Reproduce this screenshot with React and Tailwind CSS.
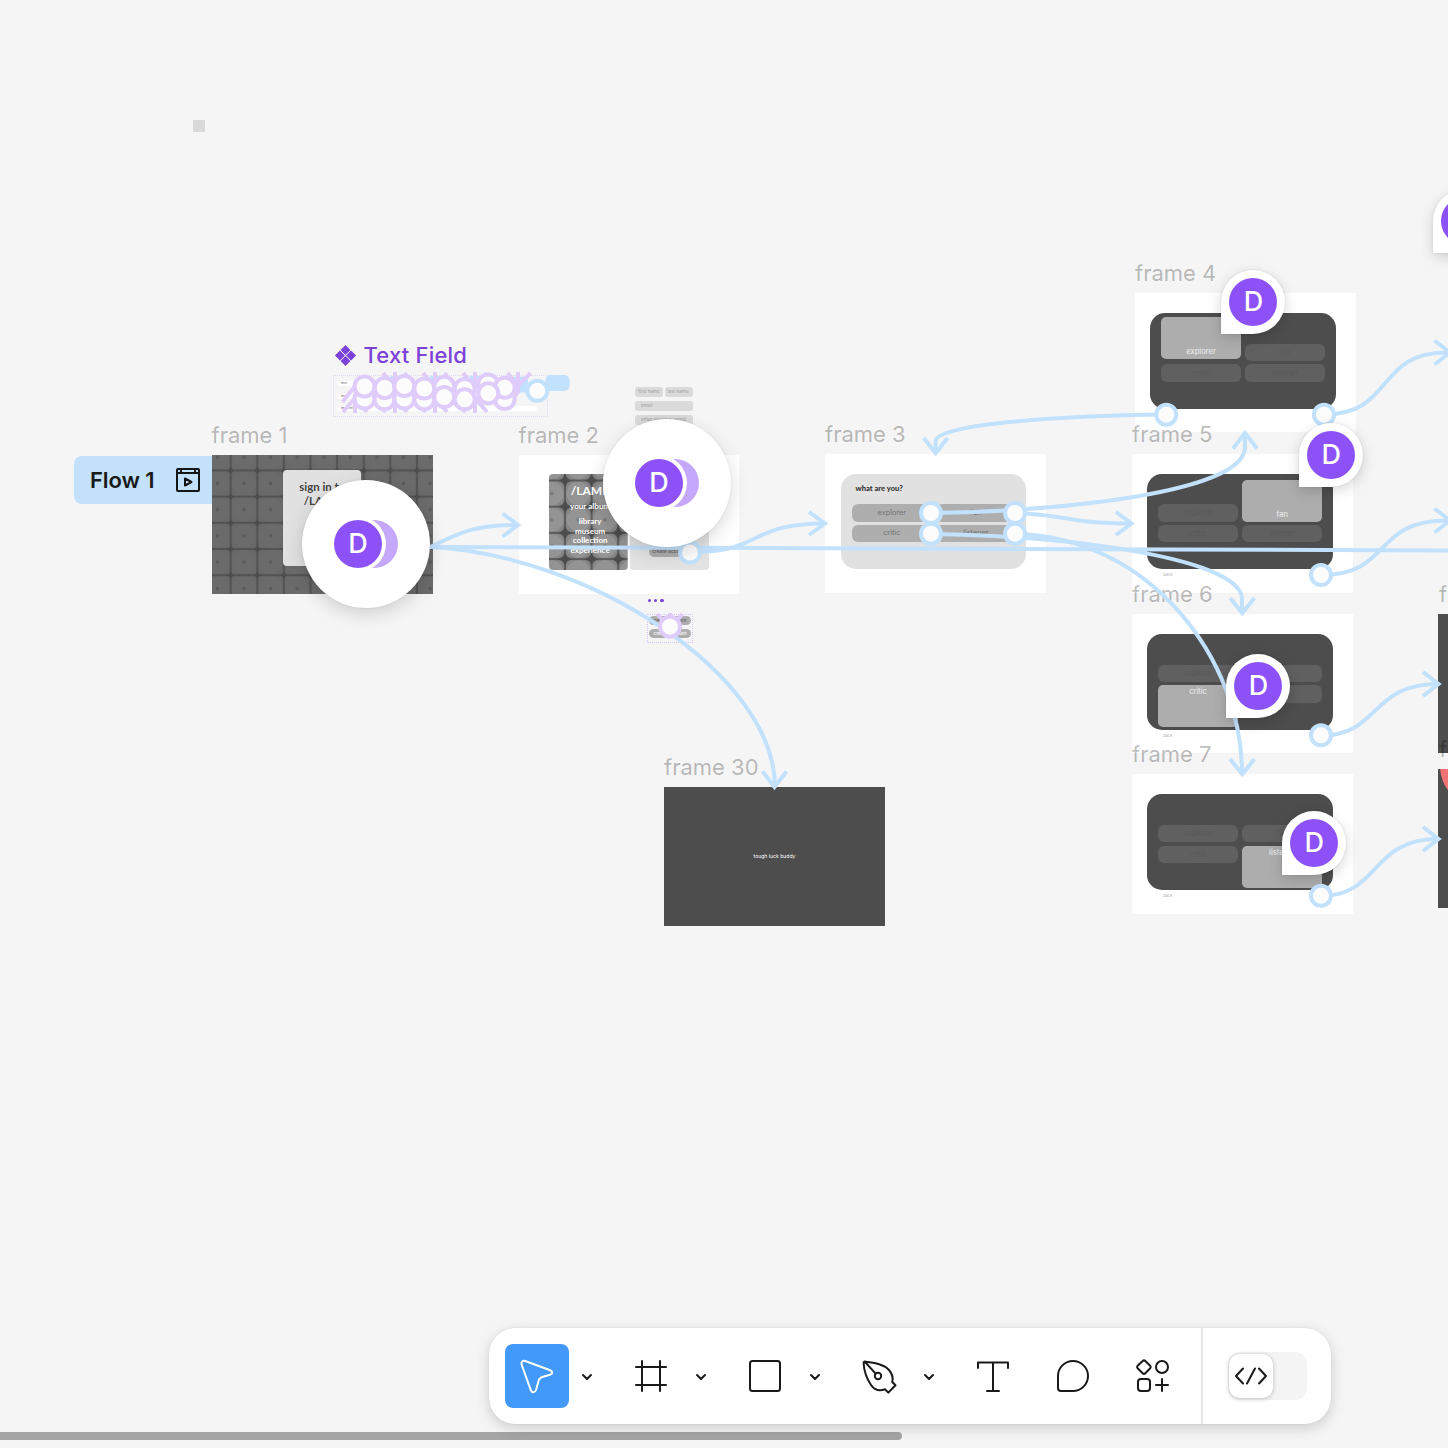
import React from "react";

const BLUE = "#c2e1fd";
const LILAC = "#dfccfa";

function Label({ className, children }) {
  return (
    <span className={`absolute text-[22px] leading-6 font-[430] whitespace-nowrap text-black/27 ${className}`}>
      {children}
    </span>
  );
}

function Pin({ className }) {
  return (
    <div className={`absolute z-20 flex size-16 items-center justify-center rounded-full rounded-bl-none bg-white shadow-[0_4px_14px_rgba(0,0,0,0.16),0_0_2px_rgba(0,0,0,0.12)] ${className}`}>
      <span className="flex size-12 items-center justify-center rounded-full bg-[#8c52f7] text-[27px] font-[450] text-white">D</span>
    </div>
  );
}

function PinCluster({ className }) {
  return (
    <div className={`absolute z-20 flex size-32 items-center justify-center rounded-full bg-white shadow-[0_6px_18px_rgba(0,0,0,0.15),0_0_2px_rgba(0,0,0,0.1)] ${className}`}>
      <span className="z-10 flex size-12 shrink-0 items-center justify-center rounded-full bg-[#8c52f7] text-[27px] font-[450] text-white ring-4 ring-white">D</span>
      <span className="-ml-8 size-12 shrink-0 rounded-full bg-[#c5a7fb]" />
    </div>
  );
}

function Texture({ id, dx, dy, light, className }) {
  return (
    <svg className={className} aria-hidden="true">
      <defs>
        <pattern id={id} width="26.6" height="26.2" x={dx} y={dy} patternUnits="userSpaceOnUse">
          <rect width="26.6" height="26.2" fill="#4c4c4c" />
          <rect x="0.7" y="0.7" width="25.2" height="24.8" rx={light ? 6 : 3.5} fill={light ? "#858585" : "#686868"} />
          <circle cx="13.3" cy="13.1" r="11.8" fill={light ? "#949494" : "#6b6b6b"} />
          <circle cx="13.3" cy="13.1" r="1.9" fill={light ? "#7a7a7a" : "#5b5b5b"} />
        </pattern>
      </defs>
      <rect width="100%" height="100%" fill={`url(#${id})`} />
    </svg>
  );
}

function Option({ active, align, children }) {
  if (active) {
    return (
      <div className={`absolute inset-x-0 flex h-[42px] justify-center rounded-[5px] bg-[#adadad] text-[7.6px] leading-[14px] text-white/80 ${align === "end" ? "bottom-0 items-end" : "top-0 items-start"}`}>
        {children}
      </div>
    );
  }
  return (
    <div className="flex h-[17.5px] w-full items-center justify-center rounded-[6px] bg-[#606060] text-[7.5px] text-[#595959]">
      {children}
    </div>
  );
}

function DarkFrame({ className, active, lift, back }) {
  const items = ["explorer", "fan", "critic", "listener"];
  return (
    <div className={`absolute h-[139.4px] w-[220.6px] bg-white px-[15.3px] pt-5 ${className}`}>
      <div className="grid h-[95.7px] w-[185.5px] grid-cols-[79.5px_79.5px] content-start gap-x-[4.7px] gap-y-[3.2px] rounded-[15px] bg-[#4d4d4d] px-[11px] pt-[30.7px]">
        {items.map((name, i) => (
          <div key={name} className={`relative h-[17.5px] ${lift && i === active ? "-translate-y-[2px]" : ""}`}>
            <Option active={i === active} align={i < 2 ? "end" : "start"}>{name}</Option>
          </div>
        ))}
      </div>
      {back && <p className="pt-[3px] pl-4 text-[4px] leading-[6px] text-black/40">back</p>}
    </div>
  );
}

const CURVES = [
  "M430 547 C455 536 468 525 518 525",
  "M430 547 C720 548 1100 549 1448 550.5",
  "M430 547 C590 555 775 675 775 787",
  "M690 552 C762 553 748 523.5 824 523.5",
  "M1166 414.5 C1050 416 936 425 935.7 441 V452",
  "M931 513 C1060 511 1245 493 1245 447 V434",
  "M1015 513 C1060 514 1070 523.5 1131 523.5",
  "M931 534 C1080 536 1242 560 1242 599 V613",
  "M1015 534 C1150 536 1242 660 1242 773",
  "M1324 414.5 C1395 414 1375 352.5 1447 352.5",
  "M1321 575 C1392 575 1372 520.5 1447 520.5",
  "M1321 735.5 C1380 735.5 1370 684 1438 684",
  "M1321 896 C1380 896 1370 839 1438 839",
];
const HEADS = [
  "M502.5 513.5 L518 525 L502.5 536.5",
  "M809 512 L825 523.5 L809 535",
  "M762.5 771.5 L774.5 787 L786.5 771.5",
  "M923.7 438 L935.7 453 L947.7 438",
  "M1233 448.5 L1245 433 L1257 448.5",
  "M1116 512 L1131.5 523.5 L1116 535",
  "M1230 598 L1242.3 613 L1254.5 598",
  "M1230 759 L1242.3 774 L1254.5 759",
  "M1434.5 340.5 L1450 352.5 L1434.5 364.5",
  "M1434.5 508.5 L1450 520.5 L1434.5 532.5",
  "M1423 672 L1438.5 684 L1423 696",
  "M1423 827 L1438.5 839 L1423 851",
];
const DOTS = [
  [690, 552.5], [931, 513], [1015, 513], [931, 533.7], [1015, 533.7],
  [1166.3, 414.7], [1324, 414.7], [1321, 575], [1321, 735.3], [1321, 895.8],
];
const FIELD_DOTS = [
  [364.5, 398.5], [384.5, 399.3], [404.3, 398.5], [424.3, 399.3], [504.7, 399], [488, 384.5],
  [364.5, 386.5], [384.7, 388], [404.3, 386], [424.3, 388.5], [444.3, 386.8], [464.7, 389],
  [444.3, 397], [464.7, 399.3], [504.7, 387.7], [488.3, 393.3],
];

function Connectors() {
  return (
    <svg className="pointer-events-none absolute inset-0 z-10 size-full" fill="none" strokeWidth="4">
      <g fill={BLUE}>
        <rect x="545.5" y="375" width="24" height="16" rx="5" />
        <rect x="512" y="376.5" width="16" height="16" rx="4" />
        <rect x="390" y="376" width="12" height="6" />
        <rect x="430" y="376" width="12" height="6" />
        <rect x="470" y="376" width="12" height="6" />
      </g>
      <g stroke={LILAC} strokeLinejoin="bevel">
        {[395, 435, 475].map((x) => (
          <path key={`t${x}`} d={`M${x - 12} 373 L${x} 387 L${x + 12} 373 M${x} 372 V387`} />
        ))}
        {[355, 395, 435, 475].map((x) => (
          <path key={`b${x}`} d={`M${x - 12} 412 L${x} 398 L${x + 12} 412 M${x} 398 V413`} />
        ))}
        <path d="M342.5 402 L356 385 M507.5 373 L518 386 L530.5 373 M518 372 V392 L508 404 M657 614 L670 628 L682.5 614 M670 613 V628" />
      </g>
      <g stroke={BLUE}>
        {CURVES.map((d) => <path key={d} d={d} />)}
        {HEADS.map((d) => <path key={d} d={d} />)}
      </g>
      <g stroke={BLUE} fill="#fcfcfc">
        {DOTS.map(([x, y]) => <circle key={`${x}-${y}`} cx={x} cy={y} r="10" />)}
        <circle cx="537.3" cy="390.8" r="10" />
      </g>
      <g stroke={LILAC} fill="#fcfcfc">
        {FIELD_DOTS.map(([x, y]) => <circle key={`${x}-${y}`} cx={x} cy={y} r="10" />)}
        <circle cx="670" cy="626.7" r="10" />
      </g>
    </svg>
  );
}

function LightOption({ children }) {
  return <div className="flex h-[17.5px] items-center justify-center rounded-[6px] bg-[#aeaeae] text-[7.3px] text-[#747474]">{children}</div>;
}

function Canvas() {
  return (
    <div className="absolute inset-0 overflow-hidden font-['Inter',sans-serif]">
      <div className="absolute top-[120px] left-[193.4px] size-3 bg-[#d9d9d9]" />

      <div className="absolute top-[456px] left-[74px] flex h-[47.5px] w-[138px] items-center justify-between rounded-l-lg bg-[#c4e1fb] pr-3 pl-4 text-[22px] font-semibold tracking-[-0.1px] text-[#1a1a1a]">
        <span className="pt-0.5">Flow 1</span>
        <svg className="size-6" viewBox="0 0 24 24" fill="none" stroke="#151515" strokeWidth="2" strokeLinejoin="round">
          <rect x="1" y="1" width="22" height="22" rx="1" />
          <path d="M1 5 H23 M5 1 V5 M19 1 V5 M9 10.5 V17.5 L15.5 14 Z" />
        </svg>
      </div>
      <div className="absolute top-[455px] left-[212px] h-[139.4px] w-[221px] overflow-hidden">
        <Texture id="tiles-a" dx="18.7" dy="15.4" className="absolute size-full" />
        <div className="absolute top-[15.4px] left-[71.3px] h-[95.3px] w-[78px] rounded-[4px] bg-[#e1e1e1] pt-[10px] text-center font-['Lato',sans-serif] text-[11.4px] leading-[13.5px] font-bold text-[#444]">
          sign in to
          <br />
          /LAMP
        </div>
      </div>

      <div className="absolute top-[343px] left-[333.5px] flex items-center gap-[7px] text-[22px] leading-6 font-[450] tracking-[0.2px] text-[#7b41d8]">
        <svg className="size-[23px]" viewBox="0 0 24 24" fill="currentColor">
          <path d="M12 1 L17.2 6.2 L12 11.4 L6.8 6.2 Z M6.2 6.8 L11.4 12 L6.2 17.2 L1 12 Z M17.8 6.8 L23 12 L17.8 17.2 L12.6 12 Z M12 12.6 L17.2 17.8 L12 23 L6.8 17.8 Z" />
        </svg>
        Text Field
      </div>
      <div className="absolute top-[375px] left-[333px] flex h-[42px] w-[215px] flex-col justify-between border border-dotted border-[#e0d8ec] px-[3px] py-[5px] text-[3.5px] text-[#666]">
        <span className="w-6 rounded-sm bg-white pl-1 leading-[5px]">text</span>
        <span className="w-6 rounded-sm bg-white pl-1 leading-[5px]">text</span>
        <span className="w-[200px] rounded-sm bg-white pl-1 leading-[5px]">text field</span>
      </div>

      <div className="absolute top-[387px] left-[635px] grid w-[57.5px] grid-cols-2 gap-x-[1.5px] gap-y-[3.5px] text-[4.6px] text-[#a0a0a0]">
        <span className="h-[10.3px] rounded-[3px] bg-[#dadada] pl-[3px] leading-[10px]">first name</span>
        <span className="h-[10.3px] rounded-[3px] bg-[#dadada] pl-[3px] leading-[10px]">last name</span>
        <span className="col-span-2 h-[10.3px] rounded-[3px] bg-[#dadada] pl-[6px] leading-[10px]">email</span>
        <span className="col-span-2 h-[10.3px] rounded-[3px] bg-[#dadada] pl-[6px] leading-[10px]">enter your password</span>
      </div>

      <div className="absolute top-[455px] left-[518.5px] flex h-[139.4px] w-[220.8px] gap-[2px] bg-white pt-[19px] pl-[30.8px]">
        <div className="relative h-24 w-[78.7px] overflow-hidden rounded-[4px] text-center font-['Lato',sans-serif] font-bold text-white">
          <Texture id="tiles-b" dx="16" dy="6.5" light className="absolute inset-0 size-full" />
          <div className="relative flex flex-col pt-[10px] pl-[3px]">
            <span className="text-[12px] leading-[14px]">/LAMP</span>
            <span className="pt-[3px] text-[8.1px] leading-[10px] whitespace-nowrap">your album</span>
            <span className="pt-[6px] text-[8px] leading-[9.5px]">library<br />museum<br />collection<br />experience</span>
          </div>
        </div>
        <div className="flex h-24 w-[78.7px] items-end justify-center rounded-[4px] bg-[#e2e2e2] pb-[13.5px]">
          <span className="h-[9.5px] w-[41px] rounded-full bg-[#adadad] text-center text-[4.8px] leading-[9.5px] font-medium whitespace-nowrap text-[#666]">create account</span>
        </div>
      </div>
      <div className="absolute top-[599px] left-[648px] flex gap-[3px]">
        <i className="size-[3.2px] rounded-full bg-[#7b41d8]" />
        <i className="size-[3.2px] rounded-full bg-[#7b41d8]" />
        <i className="size-[3.2px] rounded-full bg-[#7b41d8]" />
      </div>
      <div className="absolute top-[614px] left-[647px] flex h-[29px] w-[46px] flex-col gap-[3.5px] border border-dotted border-[#d9c6f7] px-[1.3px] pt-[1.2px] text-[4.6px] font-medium">
        <span className="h-[9px] rounded-full bg-[#adadad] text-center leading-[9px] whitespace-nowrap text-[#666]">create account</span>
        <span className="h-[9px] rounded-full bg-[#adadad] text-center leading-[9px] whitespace-nowrap text-white">create account</span>
      </div>

      <div className="absolute top-[454px] left-[825px] h-[139px] w-[221px] bg-white px-4 pt-5">
        <div className="h-[95px] w-[185px] rounded-[15px] bg-[#e1e1e1] px-[11px] pt-[8px]">
          <p className="pl-[3.5px] font-['Lato',sans-serif] text-[7.6px] leading-3 font-black text-[#333]">what are you?</p>
          <div className="mt-[10.3px] grid grid-cols-[79.5px_79.5px] gap-x-[4.6px] gap-y-[3.2px]">
            <LightOption>explorer</LightOption>
            <LightOption>fan</LightOption>
            <LightOption>critic</LightOption>
            <LightOption>listener</LightOption>
          </div>
        </div>
      </div>

      <div className="absolute top-[787px] left-[664px] flex h-[139.3px] w-[221px] items-center justify-center bg-[#4d4d4d] text-[5.1px] text-white">
        tough luck buddy
      </div>

      <DarkFrame className="top-[293px] left-[1135px]" active={0} lift />
      <DarkFrame className="top-[453.5px] left-[1132px]" active={1} back />
      <DarkFrame className="top-[614px] left-[1132px]" active={2} back />
      <DarkFrame className="top-[774.2px] left-[1132px]" active={3} back />

      <div className="absolute top-[614px] left-[1438.4px] h-[139px] w-[221px] bg-[#4d4d4d]" />
      <div className="absolute top-[769px] left-[1438.4px] h-[139.4px] w-[221px] overflow-hidden bg-[#4d4d4d]">
        <div className="absolute -top-[44px] left-[1.5px] size-[82px] rounded-full bg-[#f07272]" />
      </div>

      <Label className="top-[423px] left-[211.5px]">frame 1</Label>
      <Label className="top-[423px] left-[518.5px]">frame 2</Label>
      <Label className="top-[422px] left-[825px]">frame 3</Label>
      <Label className="top-[261px] left-[1135px]">frame 4</Label>
      <Label className="top-[422px] left-[1132px]">frame 5</Label>
      <Label className="top-[582px] left-[1132px]">frame 6</Label>
      <Label className="top-[742px] left-[1132px]">frame 7</Label>
      <Label className="top-[755px] left-[664px]">frame 30</Label>
      <Label className="top-[582px] left-[1439px]">f</Label>
      <Label className="top-[737px] left-[1439px]">f</Label>

      <Connectors />

      <PinCluster className="top-[480px] left-[302px]" />
      <PinCluster className="top-[419px] left-[603px]" />
      <Pin className="top-[270px] left-[1221.4px]" />
      <Pin className="top-[423.4px] left-[1299.3px]" />
      <Pin className="top-[654px] left-[1226.4px]" />
      <Pin className="top-[811.3px] left-[1282.3px]" />
      <Pin className="top-[189px] left-[1433px]" />
    </div>
  );
}

function Icon({ children, className = "size-10" }) {
  return (
    <svg className={className} viewBox="0 0 40 40" fill="none" stroke="currentColor" strokeWidth="2" strokeLinecap="round" strokeLinejoin="round">
      {children}
    </svg>
  );
}

function Tool({ active, menu, children }) {
  return (
    <div className="flex items-center">
      <button className={`flex size-16 items-center justify-center rounded-lg ${active ? "bg-[#4399f9] text-white" : ""}`}>
        <Icon>{children}</Icon>
      </button>
      {menu && (
        <svg className="mr-3.5 h-4 w-9" viewBox="0 0 36 16" fill="none" stroke="currentColor" strokeWidth="2" strokeLinecap="round" strokeLinejoin="round">
          <path d="M14 7 L18 11 L22 7" />
        </svg>
      )}
    </div>
  );
}

function Toolbar() {
  return (
    <div className="ml-[489px] flex h-24 w-[842px] items-center rounded-[26px] bg-white pl-4 text-[#1a1a1a] shadow-[0_4px_14px_rgba(0,0,0,0.17),0_0_1px_rgba(0,0,0,0.18)]">
      <Tool active menu>
        <path d="M8.2 5 L33.2 14.2 C36.2 15.4 35.7 18 33 18.8 L24.5 21.2 L22 23.5 L19 34 C18 37 14.9 37 13.8 34.2 L4.6 8.5 C3.8 6.2 5.5 4.2 8.2 5 Z" />
      </Tool>
      <Tool menu>
        <path d="M11 5 V35 M29 5 V35 M5 11 H35 M5 29 H35" />
      </Tool>
      <Tool menu>
        <rect x="5" y="5" width="30" height="30" rx="2.5" />
      </Tool>
      <Tool menu>
        <path d="M6 6 L16.7 17.6 M5.5 5.5 C17 7 25 8.5 30 14 C33.8 18.5 34.3 22 33.3 26 L36.5 29.2 L29.3 36.6 L26 33.3 C20 35.5 15 33.5 12 29 C8 23 5 15 4.6 7 Q4.6 5.4 6 5.5 Z" />
        <circle cx="19" cy="20" r="3.2" />
      </Tool>
      <div className="flex gap-4">
        <Tool>
          <path d="M5 12 V6.5 H35 V12 M20 6.5 V35 M14 35 H26" />
        </Tool>
        <Tool>
          <path d="M20 5 A15 15 0 0 1 20 35 H8 Q5 35 5 32 V20 A15 15 0 0 1 20 5 Z" />
        </Tool>
        <Tool>
          <path d="M9.7 5 Q11 3.7 12.3 5 L17.2 9.8 Q18.3 11 17.2 12.2 L12.3 17.2 Q11 18.5 9.7 17.2 L4.6 12.2 Q3.5 11 4.6 9.8 Z M29 23 V35 M23 29 H35" />
          <circle cx="29" cy="11" r="6" />
          <rect x="5" y="23" width="12" height="12" rx="3" />
        </Tool>
      </div>
      <div className="ml-4 h-full w-0.5 bg-[#e6e6e6]" />
      <div className="ml-[25px] flex h-12 w-[79px] items-center rounded-xl bg-[#f4f4f4] pl-px">
        <div className="flex size-11 items-center justify-center rounded-[10px] bg-white shadow-[0_1px_5px_rgba(0,0,0,0.2),0_0_1px_rgba(0,0,0,0.2)]">
          <Icon className="size-10">
            <path d="M12 12.5 L5 20 L12 27.5 M28 12.5 L35 20 L28 27.5 M24 12.5 L16 27.5" />
          </Icon>
        </div>
      </div>
    </div>
  );
}

export default function App() {
  return (
    <div className="relative flex h-[1448px] w-[1448px] flex-col justify-end overflow-hidden bg-[#f5f5f5] font-['Inter',sans-serif]">
      <Canvas />
      <div className="relative z-30">
        <Toolbar />
      </div>
      <div className="relative z-20 mt-2 mb-2 h-2 w-[901.5px] rounded-r-full bg-[#a5a5a5]" />
    </div>
  );
}
